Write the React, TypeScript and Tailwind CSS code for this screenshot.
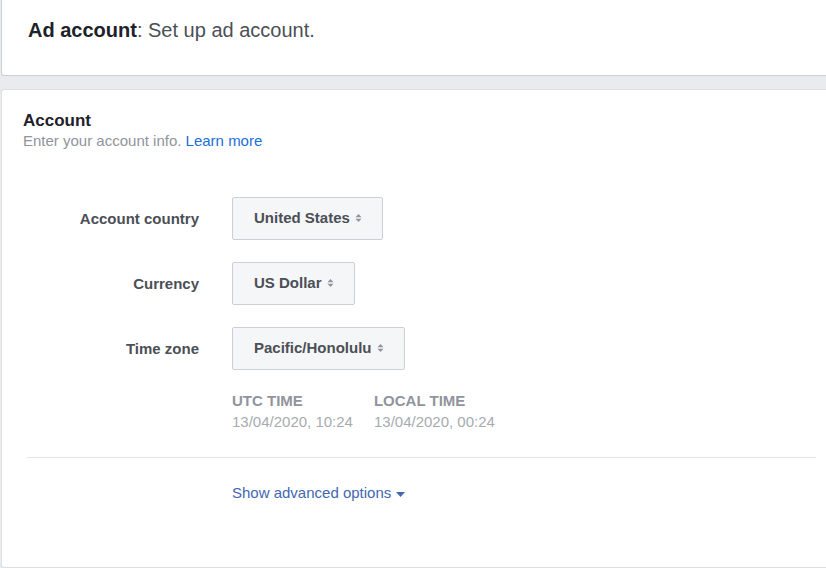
import React from "react";

const rows = [
  { label: "Account country", value: "United States", width: "w-[151px]" },
  { label: "Currency", value: "US Dollar", width: "w-[123px]" },
  { label: "Time zone", value: "Pacific/Honolulu", width: "w-[173px]" },
];

function Sorter() {
  return (
    <svg width="7" height="10" viewBox="0 0 7 10" className="ml-[5px] mt-[-1px]">
      <path d="M3.5 1 L6.5 4.2 H0.5 Z" fill="#90949c" />
      <path d="M3.5 9 L6.5 5.8 H0.5 Z" fill="#90949c" />
    </svg>
  );
}

export default function App() {
  return (
    <div
      className="h-[568px] w-[826px] overflow-hidden bg-[#e9ebee] pl-[1px]"
      style={{ fontFamily: '"Liberation Sans", Arial, Helvetica, sans-serif' }}
    >
      <div className="h-[76px] rounded-bl-[3px] border-b border-l border-[#cccfd4] bg-white pl-[26px] pt-[18px]">
        <p className="text-[20px] leading-[24px] text-[#4b4f56]">
          <span className="font-bold text-[#1d2129]">Ad account</span>: Set up ad account.
        </p>
      </div>

      <div className="mt-[13px] h-[479px] rounded-l-[3px] border-l border-t border-b border-[#dddfe2] bg-white pl-[21px] pt-[20px]">
        <h2 className="text-[17px] font-bold leading-[21px] text-[#1d2129]">Account</h2>
        <p className="text-[15px] leading-[20px] text-[#90949c]">
          Enter your account info. <span className="text-[#216fdb]">Learn more</span>
        </p>

        <div className="mt-[46px] flex flex-col gap-[22px]">
          {rows.map((r) => (
            <div key={r.label} className="flex items-center">
              <div className="w-[177px] pr-px pt-px text-right text-[15px] font-bold text-[#4b4f56]">{r.label}</div>
              <div
                className={`ml-[32px] flex h-[43px] items-center rounded-[2px] border border-[#ccd0d5] bg-[#f5f6f7] pl-[21px] text-[15px] font-bold text-[#4b4f56] ${r.width}`}
              >
                {r.value}
                <Sorter />
              </div>
            </div>
          ))}
        </div>

        <div className="ml-[209px] mt-[20px] flex gap-[21px] text-[15px] text-[#90949c]">
          <div>
            <div className="font-bold uppercase leading-[22px]">UTC Time</div>
            <div className="leading-[20px] text-[#a7abb0]">13/04/2020, 10:24</div>
          </div>
          <div>
            <div className="font-bold uppercase leading-[22px]">Local Time</div>
            <div className="leading-[20px] text-[#a7abb0]">13/04/2020, 00:24</div>
          </div>
        </div>

        <div className="ml-[4px] mr-[10px] mt-[25px] border-t border-[#e5e5e5]" />

        <div className="ml-[209px] mt-[25px] flex items-center text-[15px] leading-[20px] text-[#4267b2]">
          Show advanced options
          <svg width="9" height="5" viewBox="0 0 9 5" className="ml-[5px] mt-[2px]">
            <path d="M0 0 H9 L4.5 5 Z" fill="#4267b2" />
          </svg>
        </div>
      </div>
    </div>
  );
}
